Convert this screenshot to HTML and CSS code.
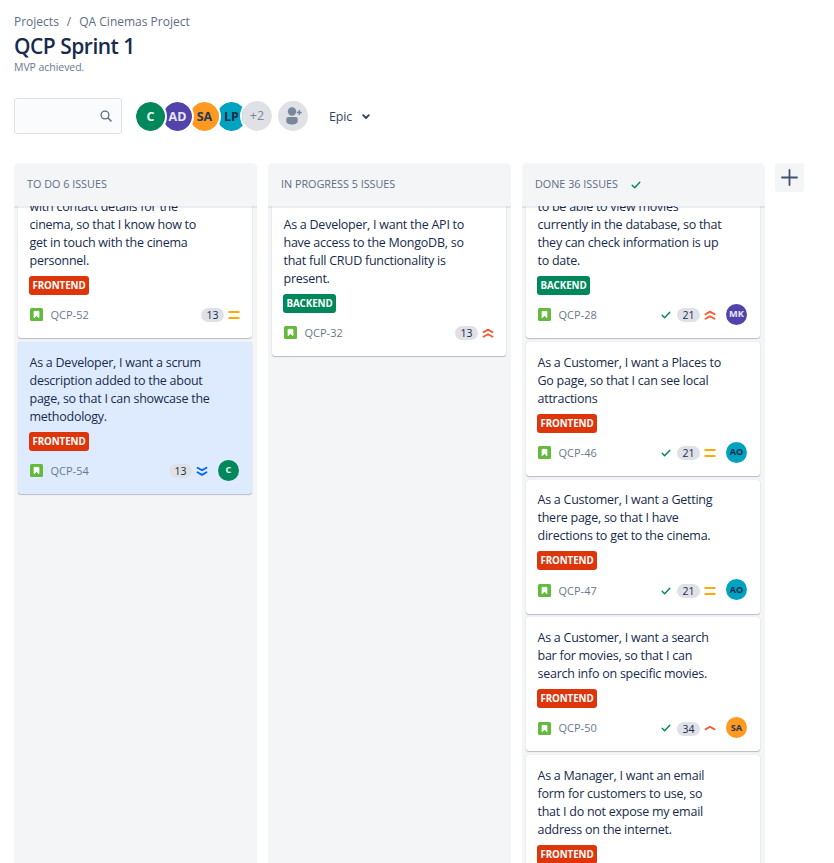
FILE: index.html
```
<!DOCTYPE html>
<html lang="en">
<head>
<meta charset="utf-8">
<title>QCP Sprint 1</title>
<link rel="stylesheet" href="styles.css">
</head>
<body>
<svg class="defs" width="0" height="0">
  <symbol id="story" viewBox="0 0 13 13"><rect width="13" height="13" rx="1.5" fill="#63ba3c"/><path d="M4.1 3.4h4.8v6.4L6.5 7.6 4.1 9.8z" fill="#fff" stroke="#fff" stroke-width=".9" stroke-linejoin="round"/></symbol>
  <symbol id="check" viewBox="0 0 10 8"><path d="M1.2 4.3l2.4 2.4L8.8 1.2" fill="none" stroke="#00875a" stroke-width="1.4" stroke-linecap="round" stroke-linejoin="round"/></symbol>
  <symbol id="medium" viewBox="0 0 12 12"><path d="M.5 3h11M.5 9h11" stroke="#ffab00" stroke-width="2"/></symbol>
  <symbol id="highest" viewBox="0 0 12 12"><path d="M1.5 5.2L6 2.6l4.5 2.600M1.500 9.800L6 7.200l4.500 2.600" fill="none" stroke="#ff5630" stroke-width="1.800" stroke-linecap="round" stroke-linejoin="round"/></symbol>
  <symbol id="high" viewBox="0 0 12 12"><path d="M1.500 7.400L6 4.800l4.500 2.600" fill="none" stroke="#ff5630" stroke-width="1.800" stroke-linecap="round" stroke-linejoin="round"/></symbol>
  <symbol id="lowest" viewBox="0 0 12 12"><path d="M1.500 2.700L6 5.300l4.500-2.600M1.500 7.300L6 9.900l4.500-2.600" fill="none" stroke="#0065ff" stroke-width="1.800" stroke-linecap="round" stroke-linejoin="round"/></symbol>
</svg>
<header class="top">
  <nav class="crumbs"><span>Projects</span><span>/</span><span>QA Cinemas Project</span></nav>
  <h1>QCP Sprint 1</h1>
  <p class="goal">MVP achieved.</p>
  <div class="tools">
    <div class="search"><svg width="12" height="12" viewBox="0 0 12 12"><circle cx="5" cy="5" r="3.900" fill="none" stroke="#5e6c84" stroke-width="1.300"/><path d="M8 8l3 3" stroke="#5e6c84" stroke-width="1.500" stroke-linecap="round"/></svg></div>
    <div class="people">
      <span class="person green">C</span><span class="person purple">AD</span><span class="person orange">SA</span><span class="person teal">LP</span><span class="person more">+2</span>
    </div>
    <div class="invite"><svg width="30" height="30" viewBox="0 0 30 30"><g fill="#7a869a"><circle cx="14" cy="10.500" r="4.200"/><path d="M8.300 18a2 2 0 0 1 2-2h7.400a2 2 0 0 1 2 2v2.500c0 4-11.400 4-11.400 0z"/></g><path d="M21.300 9v5M18.800 11.500h5" stroke="#7a869a" stroke-width="1.500"/></svg></div>
    <div class="epic"><span>Epic</span><svg width="8" height="6" viewBox="0 0 8 6"><path d="M1.200 1.200L4 4l2.800-2.800" fill="none" stroke="#344563" stroke-width="1.900" stroke-linecap="round" stroke-linejoin="round"/></svg></div>
  </div>
</header>
<main class="board">
  <section class="column">
    <h2>TO DO 6 ISSUES</h2>
    <div class="cards todo">
      <article class="card">
        <p>with contact details for the<br>cinema, so that I know how to<br>get in touch with the cinema<br>personnel.</p>
        <span class="tag front">FRONTEND</span>
        <div class="meta"><svg class="type"><use href="#story"/></svg><span class="key">QCP-52</span><span class="points">13</span><svg class="prio last"><use href="#medium"/></svg></div>
      </article>
      <article class="card selected">
        <p>As a Developer, I want a scrum<br>description added to the about<br>page, so that I can showcase the<br>methodology.</p>
        <span class="tag front">FRONTEND</span>
        <div class="meta"><svg class="type"><use href="#story"/></svg><span class="key">QCP-54</span><span class="points">13</span><svg class="prio"><use href="#lowest"/></svg><span class="who green">C</span></div>
      </article>
    </div>
  </section>
  <section class="column">
    <h2>IN PROGRESS 5 ISSUES</h2>
    <div class="cards progress">
      <article class="card">
        <p>As a Developer, I want the API to<br>have access to the MongoDB, so<br>that full CRUD functionality is<br>present.</p>
        <span class="tag back">BACKEND</span>
        <div class="meta"><svg class="type"><use href="#story"/></svg><span class="key">QCP-32</span><span class="points">13</span><svg class="prio last"><use href="#highest"/></svg></div>
      </article>
    </div>
  </section>
  <section class="column">
    <h2>DONE 36 ISSUES <svg class="done"><use href="#check"/></svg></h2>
    <div class="cards finished">
      <article class="card">
        <p>to be able to view movies<br>currently in the database, so that<br>they can check information is up<br>to date.</p>
        <span class="tag back">BACKEND</span>
        <div class="meta"><svg class="type"><use href="#story"/></svg><span class="key">QCP-28</span><svg class="tick"><use href="#check"/></svg><span class="points">21</span><svg class="prio"><use href="#highest"/></svg><span class="who purple">MK</span></div>
      </article>
      <article class="card">
        <p>As a Customer, I want a Places to<br>Go page, so that I can see local<br>attractions</p>
        <span class="tag front">FRONTEND</span>
        <div class="meta"><svg class="type"><use href="#story"/></svg><span class="key">QCP-46</span><svg class="tick"><use href="#check"/></svg><span class="points">21</span><svg class="prio"><use href="#medium"/></svg><span class="who teal">AO</span></div>
      </article>
      <article class="card">
        <p>As a Customer, I want a Getting<br>there page, so that I have<br>directions to get to the cinema.</p>
        <span class="tag front">FRONTEND</span>
        <div class="meta"><svg class="type"><use href="#story"/></svg><span class="key">QCP-47</span><svg class="tick"><use href="#check"/></svg><span class="points">21</span><svg class="prio"><use href="#medium"/></svg><span class="who teal">AO</span></div>
      </article>
      <article class="card">
        <p>As a Customer, I want a search<br>bar for movies, so that I can<br>search info on specific movies.</p>
        <span class="tag front">FRONTEND</span>
        <div class="meta"><svg class="type"><use href="#story"/></svg><span class="key">QCP-50</span><svg class="tick"><use href="#check"/></svg><span class="points">34</span><svg class="prio"><use href="#high"/></svg><span class="who orange">SA</span></div>
      </article>
      <article class="card">
        <p>As a Manager, I want an email<br>form for customers to use, so<br>that I do not expose my email<br>address on the internet.</p>
        <span class="tag front">FRONTEND</span>
      </article>
    </div>
  </section>
  <div class="add"><svg width="17" height="17" viewBox="0 0 17 17"><path d="M8.500 1v15M1 8.500h15" stroke="#42526e" stroke-width="1.800" stroke-linecap="round"/></svg></div>
</main>
</body>
</html>
```
FILE: styles.css
```
* { box-sizing: border-box; }
body {
  margin: 0;
  height: 863px;
  overflow: hidden;
  display: flex;
  flex-direction: column;
  background: #fff;
  color: #172b4d;
  font: 12.5px/18px "Open Sans", "Noto Sans", sans-serif;
}
svg { display: block; flex: none; }
.defs { position: absolute; }
.top { height: 163px; padding: 13px 14px 0; }
.crumbs { display: flex; gap: 8px; color: #5e6c84; font-size: 12px; line-height: 18px; }
h1 { margin: 3px 0 0; font-size: 21px; line-height: 24px; font-weight: 600; letter-spacing: -.5px; }
.goal { margin: 1px 0 0; color: #6b778c; font-size: 10.5px; line-height: 16px; letter-spacing: -.05px; }
.tools { display: flex; align-items: center; height: 36px; margin-top: 23px; }
.search {
  display: flex; align-items: center; justify-content: flex-end;
  width: 108px; height: 36px; padding-right: 9px;
  border: 1px solid #dfe1e6; border-radius: 3px; background: #fafbfc;
}
.people { display: flex; margin-left: 12px; padding-top: 1px; }
.person {
  display: flex; align-items: center; justify-content: center;
  position: relative;
  width: 33px; height: 33px; margin-right: -6px;
  border: 2px solid #fff; border-radius: 50%;
  background-clip: padding-box;
  font-size: 12.5px; font-weight: 700;
}
.person:nth-child(1) { z-index: 4; }
.person:nth-child(2) { z-index: 3; }
.person:nth-child(3) { z-index: 2; }
.person:nth-child(4) { z-index: 1; }
.green { background-color: #00875a; color: #e3fcef; }
.purple { background-color: #5243aa; color: #eae6ff; }
.orange { background-color: #ff991f; color: #253858; }
.teal { background-color: #00a3bf; color: #172b4d; }
.more { z-index: 5; width: 34px; height: 34px; margin: -1px -6px 0 -2px; background-color: #dfe1e6; color: #7a869a; font-weight: 400; }
.invite { margin-left: 10px; border-radius: 50%; background: #dfe1e6; }
.epic { display: flex; align-items: center; gap: 10px; margin-left: 21px; padding-top: 1px; color: #344563; font-weight: 500; letter-spacing: -.2px; }
.board { display: flex; flex: 1; min-height: 0; gap: 11px; padding-left: 14px; }
.column {
  display: flex; flex-direction: column; width: 243px;
  background: #f4f5f7; border-radius: 5px 5px 0 0;
}
h2 {
  display: flex; align-items: center; gap: 13px;
  position: relative; z-index: 1;
  flex: none; height: 45px; margin: 0 0 -2px; padding: 0 13px 2px;
  border-bottom: 2px solid rgba(9, 30, 66, .08);
  color: #5e6c84; font-size: 10.8px; font-weight: 500;
}
.done { width: 10px; height: 8px; margin-top: 2px; }
.cards { flex: 1; min-height: 0; overflow: hidden; padding: 0 4px; }
.card {
  margin-bottom: 3.7px; padding: 11.6px 13px 0 11.5px; width: 234px; height: 134px;
  background: #fff; border-radius: 3px;
  box-shadow: 0 1px 1px rgba(9, 30, 66, .25), 0 0 1px rgba(9, 30, 66, .18);
}
.card:first-child { height: 152px; margin-top: -20px; margin-bottom: 4px; }
.progress .card:first-child { margin-top: -2px; }
.card.selected { height: 152px; background: #deebff; }
.card p { margin: 0; white-space: nowrap; letter-spacing: -.25px; }
.tag {
  display: block; width: 60px; height: 19px; margin: 6px 0 0 -.5px;
  border-radius: 3px; color: #fff; text-align: center;
  font-size: 9.8px; line-height: 19px; font-weight: 700; letter-spacing: -.1px;
}
.front { background: #de350b; }
.back { width: 53px; background: #00875a; }
.meta { display: flex; align-items: center; height: 22px; margin-top: 9.4px; }
.type { width: 13px; height: 13px; margin-left: .5px; }
.key { margin: 0 auto 0 7.5px; color: #6b778c; font-size: 11px; }
.tick { width: 10px; height: 8px; margin-right: 6px; }
.points {
  width: 23px; height: 14px; margin-top: 1px; border-radius: 7px; background: #dfe1e6;
  text-align: center; font-size: 10.5px; line-height: 14px;
}
.prio { width: 12px; height: 12px; margin: 0 0 0 4px; }
.prio.last { margin-right: -1px; }
.who {
  display: flex; align-items: center; justify-content: center;
  width: 21px; height: 21px; margin: -1.5px 0 0 10px; border-radius: 50%;
  font-size: 9.2px; font-weight: 700;
}
.add {
  display: flex; align-items: center; justify-content: center;
  width: 29px; height: 29px; margin-left: -1px;
  background: #f4f5f7; border-radius: 3px;
}
```
